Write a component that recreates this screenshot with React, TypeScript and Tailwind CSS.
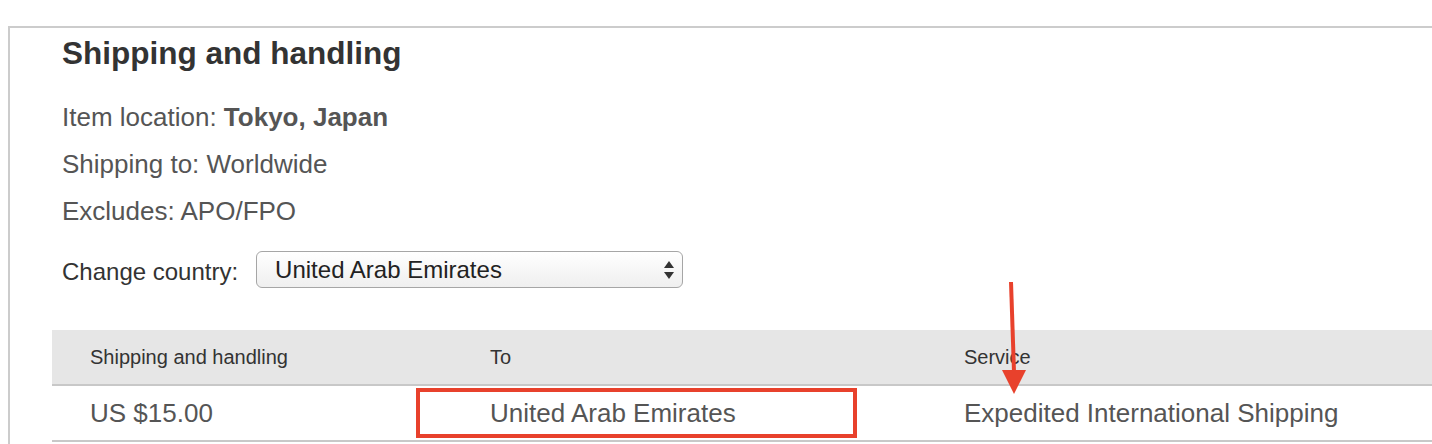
import React from 'react';

function SelectArrows() {
  return (
    <svg width="12" height="22" viewBox="0 0 12 22" className="shrink-0">
      <path d="M6 2 L11 9 L1 9 Z" fill="#333" />
      <path d="M6 20 L11 13 L1 13 Z" fill="#333" />
    </svg>
  );
}

function Arrow() {
  return (
    <svg
      width="30"
      height="118"
      viewBox="0 0 30 118"
      className="absolute left-[948px] top-[-50px] pointer-events-none"
    >
      <line x1="11" y1="2" x2="14" y2="92" stroke="#e8412c" strokeWidth="4" />
      <path d="M2 90 L26 90 L14 114 Z" fill="#e8412c" />
    </svg>
  );
}

export default function App() {
  return (
    <div className="w-[1432px] h-[444px] overflow-hidden bg-white pt-[26px] pl-[8px] font-['Liberation_Sans',Arial,sans-serif]">
      <section className="border-t-2 border-l-2 border-[#cccccc] h-full">
        <div className="pl-[52px] pt-[7px]">
          <h2 className="text-[31.5px] leading-[36px] font-bold text-[#333]">Shipping and handling</h2>
          <div className="mt-[23px] text-[26px] leading-[47px] text-[#555]">
            <p>
              Item location: <span className="font-bold">Tokyo, Japan</span>
            </p>
            <p>Shipping to: Worldwide</p>
            <p>Excludes: APO/FPO</p>
          </div>
          <div className="mt-[14px] flex items-center">
            <label className="text-[24px] text-[#333] pt-[5px] mr-[18px]">Change country:</label>
            <div className="w-[427px] h-[37px] flex items-center justify-between pl-[18px] pr-[7px] rounded-[6px] border border-[#a6a6a6] bg-gradient-to-b from-white to-[#efefef] text-[24px] text-[#222]">
              <span>United Arab Emirates</span>
              <SelectArrows />
            </div>
          </div>
        </div>

        <div className="relative ml-[42px] mt-[40px]">
          <div className="flex h-[56px] items-center bg-[#e6e6e6] border-b-2 border-[#c8c8c8] text-[20px] text-[#333]">
            <div className="w-[400px] pl-[38px]">Shipping and handling</div>
            <div className="w-[474px] pl-[38px]">To</div>
            <div className="flex-1 pl-[38px]">Service</div>
          </div>
          <div className="relative flex h-[56px] items-center border-b-2 border-[#c8c8c8] text-[26px] text-[#555]">
            <div className="w-[400px] pl-[38px]">US $15.00</div>
            <div className="w-[474px] pl-[38px]">United Arab Emirates</div>
            <div className="flex-1 pl-[38px]">Expedited International Shipping</div>
            <div className="absolute left-[364px] top-[2px] w-[441px] h-[50px] border-4 border-[#e8412c] pointer-events-none" />
          </div>
          <Arrow />
        </div>
      </section>
    </div>
  );
}
